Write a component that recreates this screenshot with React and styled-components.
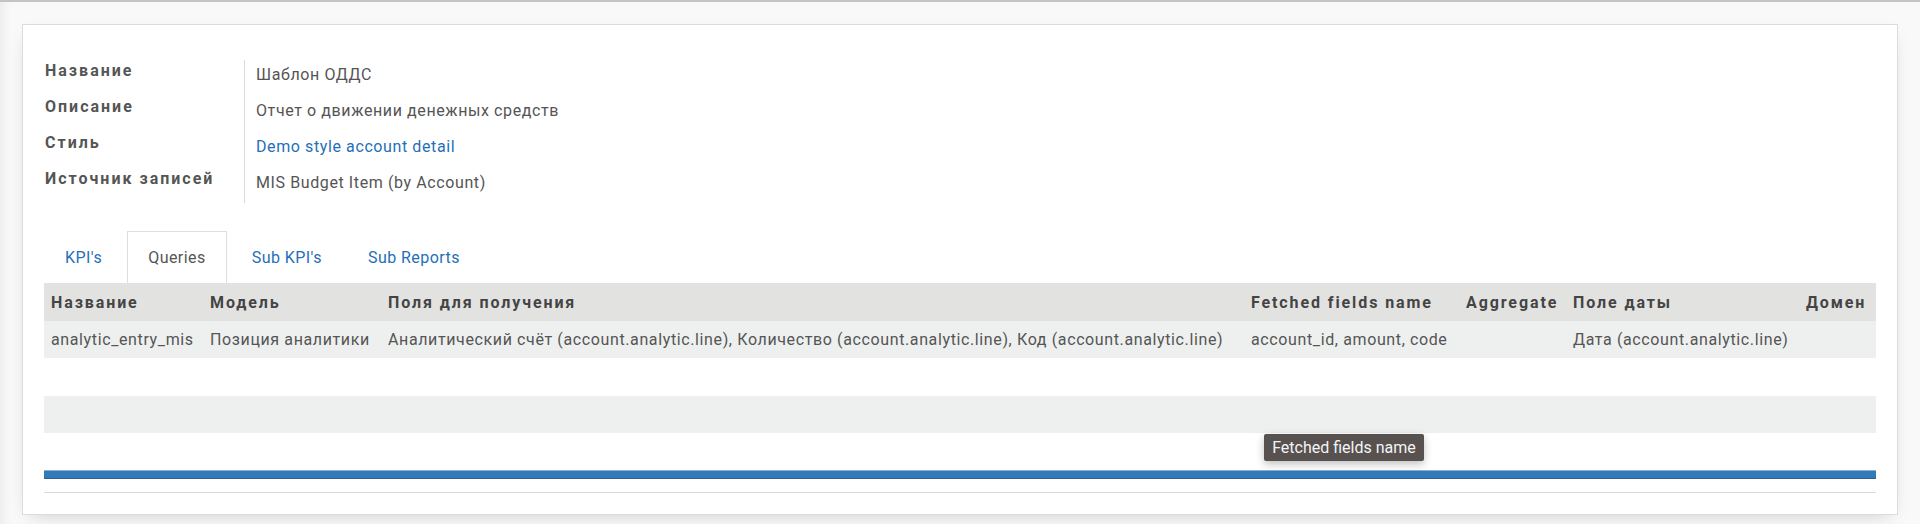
import React from 'react';
import styled, { createGlobalStyle } from 'styled-components';

const GlobalStyle = createGlobalStyle`
  html, body {
    margin: 0;
    padding: 0;
    background: #f9f9f9;
  }
  body {
    font-family: Roboto, "Noto Sans", "Liberation Sans", sans-serif;
    color: #4c4c4c;
  }
  * {
    box-sizing: border-box;
  }
`;

const Page = styled.div`
  position: relative;
  height: 524px;
  border-top: 2px solid #c4c4c4;
  padding: 22px 22px 0 22px;
  background: #f9f9f9;
  box-shadow: inset 10px 0 14px -10px rgba(0, 0, 0, 0.09);
`;

const Sheet = styled.div`
  background: #fff;
  border: 1px solid #dcdcdc;
  box-shadow: 0 6px 18px -8px rgba(0, 0, 0, 0.22);
  padding: 35px 21px 21px 21px;
`;

const InfoGroup = styled.div`
  display: flex;
`;

const LabelColumn = styled.div`
  width: 200px;
  display: flex;
  flex-direction: column;
  gap: 12px;
  margin-top: -1px;
`;

const ValueColumn = styled.div`
  display: flex;
  flex-direction: column;
  gap: 12px;
  border-left: 1px solid #dadada;
  padding: 3px 0 8px 11px;
`;

const Label = styled.div`
  line-height: 24px;
  font-size: 16px;
  font-weight: 700;
  letter-spacing: 2px;
  color: #555;
  padding-left: 1px;
`;

const Value = styled.div`
  line-height: 24px;
  font-size: 16px;
  letter-spacing: 0.6px;
  color: ${(p) => (p.$link ? '#1f6fb8' : '#555')};
`;

const Tabs = styled.div`
  display: flex;
  gap: 4px;
  margin: 28px 0 0 0;
`;

const Tab = styled.div`
  height: 52px;
  line-height: 52px;
  padding: 0 20px;
  font-size: 16px;
  letter-spacing: 0.45px;
  color: ${(p) => (p.$active ? '#555' : '#1f6fb8')};
  background: ${(p) => (p.$active ? '#fff' : 'transparent')};
  border: 1px solid ${(p) => (p.$active ? '#dedede' : 'transparent')};
  border-bottom: none;
`;

const Table = styled.table`
  width: 100%;
  border-collapse: collapse;
  table-layout: fixed;
  font-size: 16px;
`;

const HeadCell = styled.th`
  height: 38px;
  padding: 0 7px;
  text-align: left;
  font-weight: 700;
  letter-spacing: 1.9px;
  color: #444;
  background: #e2e2e1;
  white-space: nowrap;
  overflow: hidden;
`;

const Row = styled.tr`
  background: ${(p) => (p.$striped ? '#eef0ef' : '#fff')};
`;

const Cell = styled.td`
  height: ${(p) => p.$h || 37}px;
  padding: 0 7px;
  letter-spacing: 0.62px;
  color: #555;
  white-space: nowrap;
  overflow: hidden;
`;

const ProgressBar = styled.div`
  height: 9px;
  background: #337ab7;
  border-top: 1px solid #86b0d8;
  border-bottom: 1px solid #29639a;
`;

const Footer = styled.div`
  height: 14px;
  border-bottom: 1px solid #d9d9d9;
`;

const Tooltip = styled.div`
  position: absolute;
  left: 1264px;
  top: 432px;
  width: 160px;
  height: 27px;
  line-height: 27px;
  text-align: center;
  font-size: 16px;
  color: #f4f4f4;
  background: #575150;
  border-radius: 2px;
  box-shadow: 0 3px 8px rgba(0, 0, 0, 0.25);
`;

const columns = [
  { title: 'Название', width: 159 },
  { title: 'Модель', width: 178 },
  { title: 'Поля для получения', width: 863 },
  { title: 'Fetched fields name', width: 215 },
  { title: 'Aggregate', width: 107 },
  { title: 'Поле даты', width: 233 },
  { title: 'Домен', width: 77 },
];

const record = [
  'analytic_entry_mis',
  'Позиция аналитики',
  'Аналитический счёт (account.analytic.line), Количество (account.analytic.line), Код (account.analytic.line)',
  'account_id, amount, code',
  '',
  'Дата (account.analytic.line)',
  '',
];

const info = [
  { label: 'Название', value: 'Шаблон ОДДС' },
  { label: 'Описание', value: 'Отчет о движении денежных средств' },
  { label: 'Стиль', value: 'Demo style account detail', link: true },
  { label: 'Источник записей', value: 'MIS Budget Item (by Account)' },
];

const tabs = ["KPI's", 'Queries', "Sub KPI's", 'Sub Reports'];

const App = () => {
  return (
    <Page>
      <GlobalStyle />
      <Sheet>
        <InfoGroup>
          <LabelColumn>
            {info.map((item) => (
              <Label key={item.label}>{item.label}</Label>
            ))}
          </LabelColumn>
          <ValueColumn>
            {info.map((item) => (
              <Value key={item.label} $link={item.link}>{item.value}</Value>
            ))}
          </ValueColumn>
        </InfoGroup>

        <Tabs>
          {tabs.map((t) => (
            <Tab key={t} $active={t === 'Queries'}>{t}</Tab>
          ))}
        </Tabs>

        <Table>
          <colgroup>
            {columns.map((c) => (
              <col key={c.title} style={{ width: c.width }} />
            ))}
          </colgroup>
          <thead>
            <tr>
              {columns.map((c) => (
                <HeadCell key={c.title}>{c.title}</HeadCell>
              ))}
            </tr>
          </thead>
          <tbody>
            <Row $striped>
              {record.map((v, i) => (
                <Cell key={i}>{v}</Cell>
              ))}
            </Row>
            <Row>
              <Cell colSpan={7} $h={38} />
            </Row>
            <Row $striped>
              <Cell colSpan={7} />
            </Row>
            <Row>
              <Cell colSpan={7} />
            </Row>
          </tbody>
        </Table>
        <ProgressBar />
        <Footer />
      </Sheet>
      <Tooltip>Fetched fields name</Tooltip>
    </Page>
  );
};

export default App;
